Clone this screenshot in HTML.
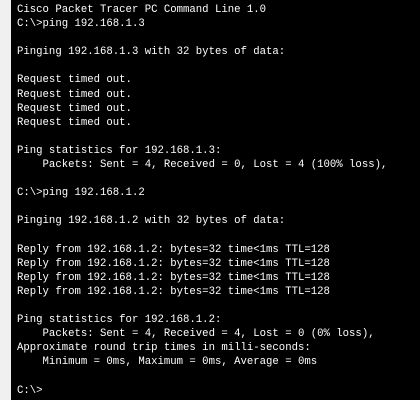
<!DOCTYPE html>
<html><head><style>
html,body{margin:0;padding:0;width:420px;height:400px;overflow:hidden;background:#000}
.side{position:absolute;left:0;top:0;width:11px;height:400px;background:#f0f0f0}
pre{position:absolute;left:17px;top:3px;margin:0;color:#fff;font-family:"Liberation Mono",monospace;font-size:10.65px;line-height:14.1px}
</style></head><body>
<div class="side"></div>
<pre>Cisco Packet Tracer PC Command Line 1.0
C:\&gt;ping 192.168.1.3

Pinging 192.168.1.3 with 32 bytes of data:

Request timed out.
Request timed out.
Request timed out.
Request timed out.

Ping statistics for 192.168.1.3:
    Packets: Sent = 4, Received = 0, Lost = 4 (100% loss),

C:\&gt;ping 192.168.1.2

Pinging 192.168.1.2 with 32 bytes of data:

Reply from 192.168.1.2: bytes=32 time&lt;1ms TTL=128
Reply from 192.168.1.2: bytes=32 time&lt;1ms TTL=128
Reply from 192.168.1.2: bytes=32 time&lt;1ms TTL=128
Reply from 192.168.1.2: bytes=32 time&lt;1ms TTL=128

Ping statistics for 192.168.1.2:
    Packets: Sent = 4, Received = 4, Lost = 0 (0% loss),
Approximate round trip times in milli-seconds:
    Minimum = 0ms, Maximum = 0ms, Average = 0ms

C:\&gt;</pre>
</body></html>
